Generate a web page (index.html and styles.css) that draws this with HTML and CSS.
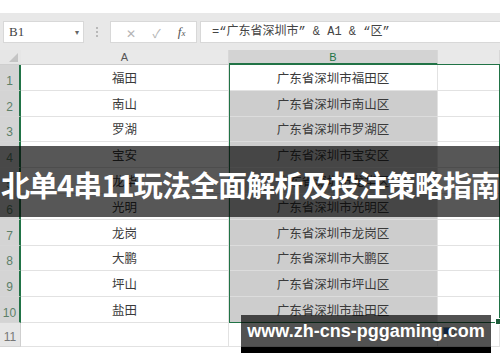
FILE: index.html
```html
<!DOCTYPE html>
<html lang="zh">
<head>
  <meta charset="UTF-8">
  <title>北单4串11玩法全面解析及投注策略指南</title>
  <link rel="stylesheet" href="styles.css">
</head>
<body>
  <div class="page">
    <div class="top-gap"></div>

    <!-- Formula toolbar -->
    <div class="toolbar">
      <div class="name-box">
        <span>B1</span>
        <span class="caret">&#9662;</span>
      </div>
      <div class="grip"><i></i><i></i><i></i></div>
      <div class="fx-box">
        <span class="fx-btn">&#10005;</span>
        <span class="fx-btn">&#10003;</span>
        <span class="fx-label"><i>f</i><small>x</small></span>
      </div>
      <div class="formula">=“广东省深圳市” &amp; A1 &amp; “区”</div>
    </div>

    <!-- Sheet -->
    <div class="sheet" id="sheet">
      <div class="corner"><span class="tri"></span></div>
      <div class="col-head">A</div>
      <div class="col-head sel">B</div>
      <div class="col-head"></div>
    </div>

    <div class="banner"><span>北单4串11玩法全面解析及投注策略指南</span></div>
    <div class="watermark">www.zh-cns-pggaming.com</div>
  </div>

  <script>
    const districts = ["福田", "南山", "罗湖", "宝安", "龙华", "光明", "龙岗", "大鹏", "坪山", "盐田"];
    const sheet = document.getElementById("sheet");

    // Build rows
    districts.forEach((name, i) => {
      const row = document.createElement("div");
      row.className = "row-head sel";
      row.textContent = i + 1;
      sheet.appendChild(row);

      const a = document.createElement("div");
      a.className = "cell";
      a.textContent = name;
      sheet.appendChild(a);

      const b = document.createElement("div");
      b.className = i === 0 ? "cell" : "cell hl";
      b.textContent = "广东省深圳市" + name + "区";
      sheet.appendChild(b);

      const c = document.createElement("div");
      c.className = "cell";
      sheet.appendChild(c);
    });

    // Empty row 11, selection frame and quick analysis button
    sheet.insertAdjacentHTML("beforeend",
      '<div class="row-head">11</div><div class="cell"></div><div class="cell"></div><div class="cell"></div>' +
      '<div class="selection"><span class="handle"></span></div>' +
      '<div class="quick"><span></span></div>');
  </script>
</body>
</html>
```

FILE: styles.css
```css
body {
  margin: 0;
  background: #fff;
  font-family: "Noto Sans CJK SC", "Noto Sans", sans-serif;
  color: #333;
}

.page {
  position: relative;
  width: 500px;
  height: 362px;
  overflow: hidden;
}

.top-gap {
  height: 13px;
}

/* toolbar */
.toolbar {
  height: 37px;
  background: #e8e8e8;
  display: flex;
  align-items: center;
  padding-top: 1px;
  box-sizing: border-box;
}

.name-box {
  margin-left: 3px;
  width: 81px;
  height: 22px;
  box-sizing: border-box;
  background: #fff;
  border: 1px solid #d8d8d8;
  display: flex;
  align-items: center;
  justify-content: space-between;
  padding: 0 4px 0 5px;
  font-family: "Liberation Serif", serif;
  font-size: 13px;
  color: #444;
}

.caret {
  font-size: 8px;
  color: #666;
}

.grip {
  width: 26px;
  display: flex;
  flex-direction: column;
  align-items: center;
  gap: 2px;
}

.grip i {
  width: 2px;
  height: 2px;
  background: #b8b8b8;
}

.fx-box {
  width: 87px;
  height: 22px;
  box-sizing: border-box;
  background: #fff;
  border: 1px solid #d8d8d8;
  display: flex;
  align-items: center;
  justify-content: space-around;
  padding: 0 2px 0 6px;
  color: #b4b4b4;
  font-size: 12px;
}

.fx-label {
  color: #555;
  font-family: "Liberation Serif", serif;
  font-size: 13px;
}

.fx-label small {
  font-size: 9px;
  font-style: italic;
}

.formula {
  margin-left: 3px;
  flex: 1;
  height: 22px;
  box-sizing: border-box;
  background: #fff;
  border: 1px solid #d8d8d8;
  border-right: none;
  padding-left: 11px;
  line-height: 20px;
  font-size: 12px;
  color: #444;
  font-family: "Liberation Mono", "Noto Sans CJK SC", monospace;
  white-space: nowrap;
}

/* sheet grid */
.sheet {
  position: relative;
  display: grid;
  grid-template-columns: 21px 208px 209px 62px;
  grid-template-rows: 15px repeat(10, 25.8px) 24px;
  font-size: 12.5px;
}

.corner {
  background: #e6e6e6;
  border-bottom: 1px solid #cfcfcf;
  position: relative;
}

.tri {
  position: absolute;
  right: 3px;
  bottom: 2px;
  width: 0;
  height: 0;
  border-left: 9px solid transparent;
  border-bottom: 9px solid #c4c4c4;
}

.col-head {
  background: #e9e9e9;
  border-bottom: 1px solid #cfcfcf;
  border-right: 1px solid #d8d8d8;
  text-align: center;
  font-family: "Liberation Sans", sans-serif;
  font-size: 11px;
  line-height: 15px;
  color: #555;
}

.col-head.sel {
  background: #d3d3d3;
  border-bottom: 2px solid #217346;
  color: #217346;
}

.row-head {
  background: #e6e6e6;
  border-bottom: 1px solid #d6d6d6;
  border-right: 1px solid #cfcfcf;
  font-family: "Liberation Sans", sans-serif;
  font-size: 12px;
  color: #777;
  display: flex;
  align-items: flex-end;
  justify-content: center;
  padding-bottom: 2px;
  box-sizing: border-box;
}

.row-head.sel {
  background: #d4d4d4;
  border-right: 2px solid #217346;
  color: #5c7f68;
}

.cell {
  background: #fff;
  border-bottom: 1px solid #e2e2e2;
  border-right: 1px solid #e2e2e2;
  display: flex;
  align-items: center;
  justify-content: center;
  color: #3a3a3a;
  white-space: nowrap;
}

.cell.hl {
  background: #cdcdcd;
  border-bottom-color: #dcdcdc;
}

/* absolutely placed in grid areas so they don't take grid cells */
.selection {
  position: absolute;
  inset: -1px 0 0 0;
  grid-column: 3;
  grid-row: 2 / 12;
  border: 1.5px solid #217346;
  pointer-events: none;
}

.handle {
  position: absolute;
  right: -3px;
  bottom: -3px;
  width: 5px;
  height: 5px;
  background: #1e5c3a;
  border: 1px solid #fff;
}

.quick {
  position: absolute;
  top: 4px;
  left: 5px;
  grid-column: 4;
  grid-row: 12;
}

.quick span {
  display: block;
  width: 10px;
  height: 6px;
  border: 1px solid #9aa;
  background: linear-gradient(90deg, #3a6fc4 50%, #ddd 50%);
}

/* overlays */
.banner {
  position: absolute;
  left: 0;
  right: 0;
  top: 146px;
  height: 71px;
  background: rgba(0, 0, 0, 0.66);
  color: #fff;
  font-weight: 700;
  font-size: 29px;
  display: flex;
  align-items: center;
  justify-content: center;
  white-space: nowrap;
  letter-spacing: -0.9px;
}

.banner span {
  margin-top: 4px;
}

.watermark {
  position: absolute;
  left: 241px;
  top: 315px;
  width: 250px;
  height: 32px;
  background: rgba(0, 0, 0, 0.68);
  border-bottom: 6px solid #000;
  color: #fff;
  font-family: "Liberation Sans", sans-serif;
  font-weight: 700;
  font-size: 18px;
  line-height: 32px;
  text-align: center;
  white-space: nowrap;
}
```
